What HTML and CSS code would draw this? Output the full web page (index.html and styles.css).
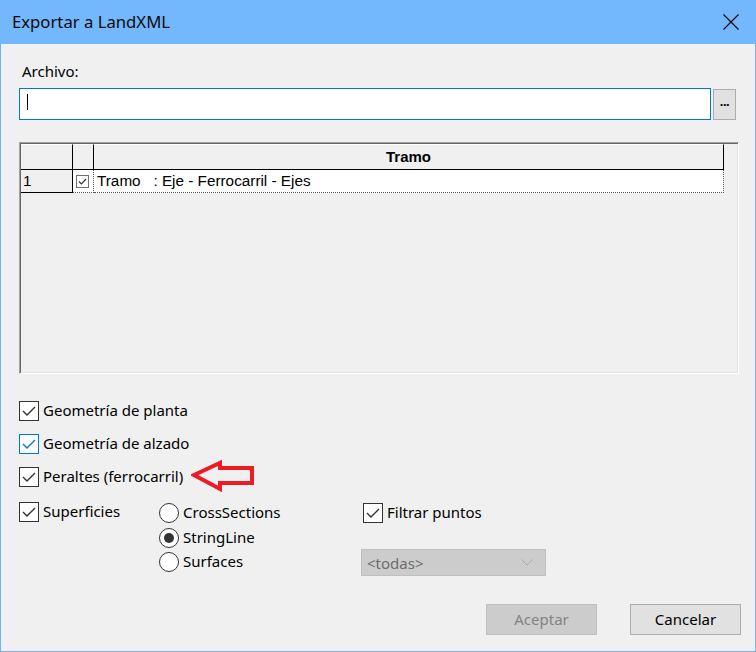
FILE: index.html
```html
<!DOCTYPE html>
<html lang="es">
<head>
<meta charset="utf-8">
<title>Exportar a LandXML</title>
<link rel="stylesheet" href="styles.css">
</head>
<body>
<div class="window">
  <div class="titlebar">
    <span class="title">Exportar a LandXML</span>
    <svg class="close" width="16" height="16" viewBox="0 0 16 16"><path d="M0.5 0.5 L15.5 15.5 M15.5 0.5 L0.5 15.5" stroke="#000" stroke-width="1.1" fill="none"/></svg>
  </div>
  <div class="content">
    <div class="label">Archivo:</div>
    <div class="file-row">
      <div class="input"><span class="caret"></span></div>
      <div class="browse">...</div>
    </div>

    <div class="grid">
      <div class="grid-row head">
        <div class="cell c0"></div>
        <div class="cell c1"></div>
        <div class="cell c2">Tramo</div>
      </div>
      <div class="grid-row data">
        <div class="cell c0">1</div>
        <div class="cell c1"><span class="mini-check"><svg width="11" height="11" viewBox="0 0 11 11"><path d="M2 5.5 L4.5 8 L9 3" stroke="#333" stroke-width="1.2" fill="none"/></svg></span></div>
        <div class="cell c2 txt">Tramo   : Eje - Ferrocarril - Ejes</div>
      </div>
    </div>

    <div class="options">
      <div class="opt">
        <span class="check"><svg width="18" height="18" viewBox="0 0 18 18"><path d="M3 9 L7 13 L15 5" stroke="#333" stroke-width="1.4" fill="none"/></svg></span>
        <span class="opt-label">Geometría de planta</span>
      </div>
      <div class="opt">
        <span class="check focus"><svg width="18" height="18" viewBox="0 0 18 18"><path d="M3 9 L7 13 L15 5" stroke="#0078d7" stroke-width="1.4" fill="none"/></svg></span>
        <span class="opt-label">Geometría de alzado</span>
      </div>
      <div class="opt">
        <span class="check"><svg width="18" height="18" viewBox="0 0 18 18"><path d="M3 9 L7 13 L15 5" stroke="#333" stroke-width="1.4" fill="none"/></svg></span>
        <span class="opt-label">Peraltes (ferrocarril)</span>
        <svg class="arrow" width="66" height="34" viewBox="0 0 66 34"><path d="M3 16 L29 4 L29 9 L61 9 L61 24 L29 24 L29 30 Z" stroke="#ed1c24" stroke-width="4" stroke-linejoin="miter" fill="none"/></svg>
      </div>
    </div>

    <div class="lower">
      <div class="col-a">
        <div class="opt">
          <span class="check"><svg width="18" height="18" viewBox="0 0 18 18"><path d="M3 9 L7 13 L15 5" stroke="#333" stroke-width="1.4" fill="none"/></svg></span>
          <span class="opt-label">Superficies</span>
        </div>
      </div>
      <div class="col-b">
        <div class="radio-row"><span class="radio"></span><span class="opt-label">CrossSections</span></div>
        <div class="radio-row"><span class="radio on"></span><span class="opt-label">StringLine</span></div>
        <div class="radio-row"><span class="radio"></span><span class="opt-label">Surfaces</span></div>
      </div>
      <div class="col-c">
        <div class="opt">
          <span class="check"><svg width="18" height="18" viewBox="0 0 18 18"><path d="M3 9 L7 13 L15 5" stroke="#333" stroke-width="1.4" fill="none"/></svg></span>
          <span class="opt-label">Filtrar puntos</span>
        </div>
        <div class="combo">
          <span class="combo-text">&lt;todas&gt;</span>
          <svg class="chev" width="12" height="7" viewBox="0 0 12 7"><path d="M0.5 0.5 L6 6 L11.5 0.5" stroke="#a8a8a8" stroke-width="1" fill="none"/></svg>
        </div>
      </div>
    </div>

    <div class="buttons">
      <div class="btn disabled">Aceptar</div>
      <div class="btn">Cancelar</div>
    </div>
  </div>
</div>
</body>
</html>
```
FILE: styles.css
```css
html, body {
  margin: 0;
  padding: 0;
  background: #f0f0f0;
}
.window {
  width: 756px;
  height: 652px;
  box-sizing: border-box;
  border: 1px solid #76b3ee;
  border-top: none;
  background: #f0f0f0;
  display: flex;
  flex-direction: column;
  font-family: "Noto Sans", "Open Sans", sans-serif;
  font-size: 15px;
  color: #000;
}
.titlebar {
  height: 44px;
  flex: none;
  background: #73b8fc;
  display: flex;
  align-items: center;
  justify-content: space-between;
  padding: 0 17px 0 12px;
  margin: 0 -1px;
}
.title {
  font-size: 16.7px;
  color: #0a0a0a;
  margin-top: -1px;
}
.close {
  margin-top: -1px;
}
.content {
  flex: 1;
  display: flex;
  flex-direction: column;
  padding: 0 14px 0 18px;
}
.label {
  margin-top: 14px;
  padding-left: 3px;
  height: 27px;
  line-height: 27px;
}
.file-row {
  display: flex;
  align-items: flex-start;
  margin-top: 3px;
}
.input {
  width: 692px;
  height: 32px;
  box-sizing: border-box;
  border: 1px solid #0078d7;
  background: #fff;
  position: relative;
}
.caret {
  position: absolute;
  left: 7px;
  top: 5px;
  width: 1px;
  height: 16px;
  background: #000;
}
.browse {
  width: 23px;
  height: 31px;
  box-sizing: border-box;
  margin-left: 2px;
  margin-top: 1px;
  border: 1px solid #adadad;
  background: #e1e1e1;
  font-family: "Liberation Sans", sans-serif;
  font-weight: bold;
  font-size: 13px;
  text-align: center;
  line-height: 24px;
  letter-spacing: -0.5px;
}

/* grid */
.grid {
  margin-top: 22px;
  width: 720px;
  height: 232px;
  box-sizing: border-box;
  border-style: solid;
  border-width: 1px;
  border-color: #a0a0a0 #ffffff #ffffff #a0a0a0;
  box-shadow: inset 1px 1px 0 #696969, inset -1px -1px 0 #e3e3e3;
  padding: 1px;
  background: #f0f0f0;
  font-family: "Liberation Sans", Arial, sans-serif;
  font-size: 15.3px;
}
.grid-row {
  display: flex;
}
.cell {
  box-sizing: border-box;
  border-right: 1px solid #000;
  border-bottom: 1px solid #000;
}
.head .cell {
  height: 26px;
  background: #f0f0f0;
  border-top: 1px solid #fff;
}
.head .c2 {
  font-weight: bold;
  font-size: 15px;
  text-align: center;
  line-height: 23px;
}
.c0 { width: 52px; }
.c1 { width: 21px; }
.c2 { width: 630px; }
.data .cell {
  height: 23px;
  line-height: 21px;
}
.data .c0 {
  padding-left: 2px;
  background: #f0f0f0;
}
.data .c1, .data .c2 {
  background: #fff;
  border-right: 1px dotted #555;
  border-bottom: 1px dotted #555;
}
.data .c1 {
  display: flex;
  align-items: center;
  justify-content: center;
}
.txt {
  white-space: pre;
  padding-left: 3px;
}
.mini-check {
  width: 13px;
  height: 13px;
  box-sizing: border-box;
  border: 1px solid #707070;
  background: #fff;
  display: flex;
  align-items: center;
  justify-content: center;
  margin-left: -1px;
}

/* options */
.options {
  margin-top: 27px;
  display: flex;
  flex-direction: column;
  gap: 13px;
}
.opt {
  display: flex;
  align-items: center;
  height: 20px;
  position: relative;
}
.check {
  width: 20px;
  height: 20px;
  box-sizing: border-box;
  border: 1px solid #333;
  background: #fff;
  display: flex;
  align-items: center;
  justify-content: center;
  flex: none;
}
.check.focus {
  border-color: #0078d7;
}
.opt-label {
  margin-left: 4px;
  line-height: 20px;
  white-space: nowrap;
  margin-top: -2px;
}
.arrow {
  position: absolute;
  left: 172px;
  top: -8px;
}

.lower {
  margin-top: 15px;
  display: flex;
  align-items: flex-start;
}
.col-a {
  width: 140px;
  margin-top: 0;
}
.col-b {
  width: 202px;
  margin-top: 1px;
  display: flex;
  flex-direction: column;
  gap: 4.5px;
}
.radio-row {
  display: flex;
  align-items: center;
  height: 20px;
}
.radio {
  width: 20px;
  height: 20px;
  box-sizing: border-box;
  border: 1px solid #333;
  border-radius: 50%;
  background: #fff;
  flex: none;
  display: flex;
  align-items: center;
  justify-content: center;
}
.radio.on::after {
  content: "";
  width: 10px;
  height: 10px;
  border-radius: 50%;
  background: #333;
}
.col-c {
  display: flex;
  flex-direction: column;
  margin-top: 1px;
}
.col-c .opt {
  margin-left: 2px;
}
.combo {
  margin-top: 26px;
  width: 185px;
  height: 27px;
  box-sizing: border-box;
  border: 1px solid #bfbfbf;
  background: #cccccc;
  display: flex;
  align-items: center;
  justify-content: space-between;
  padding: 0 12px 0 5px;
}
.combo-text {
  color: #6d6d6d;
}
.buttons {
  margin-top: 28px;
  display: flex;
  justify-content: flex-end;
  gap: 33px;
}
.btn {
  width: 111px;
  height: 31px;
  box-sizing: border-box;
  border: 1px solid #adadad;
  background: #e1e1e1;
  text-align: center;
  line-height: 28px;
}
.btn.disabled {
  background: #cccccc;
  border-color: #bfbfbf;
  color: #838383;
}
```
